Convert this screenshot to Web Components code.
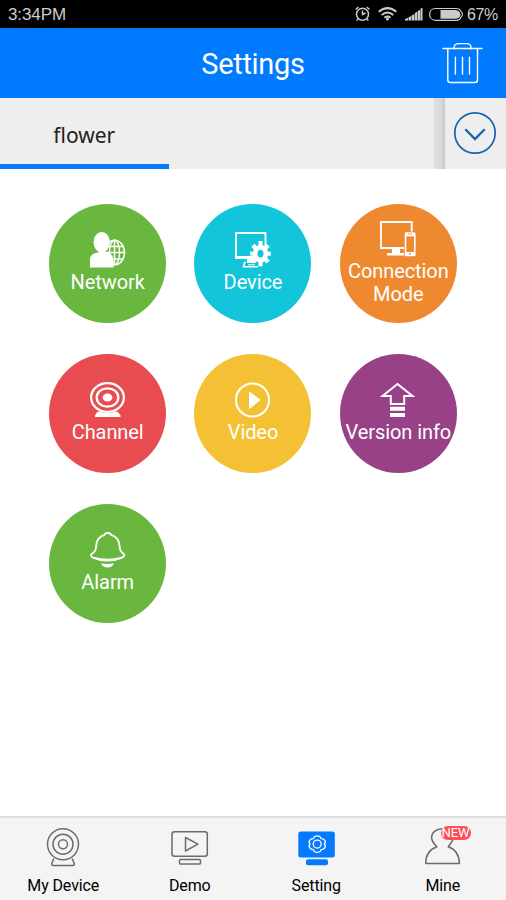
<!DOCTYPE html>
<html lang="en">
<head>
<meta charset="utf-8">
<title>Settings</title>
<style>
html,body{margin:0;height:100%}
body{font-family:Roboto,"Liberation Sans",sans-serif;background:#fff;overflow:hidden}
</style>
</head>
<body>
<settings-app></settings-app>
<script>
const ICONS = {
  network: `<ellipse cx="24.5" cy="20.500" rx="10" ry="12.3" fill="none" stroke="#fff" stroke-width="1.6"/>
    <ellipse cx="24.5" cy="20.500" rx="5" ry="12.3" fill="none" stroke="#fff" stroke-width="1.4"/>
    <path d="M24.5 8.5V33M15 14.500H33.500M15 20.500H35M15 27H33.500" stroke="#fff" stroke-width="1.5" fill="none"/>
    <path d="M0 35.500V27Q0 22 8 20.500L12 19.500L18 20.500Q22.500 22 23.500 27V35.500Z" fill="#fff"/>
    <ellipse cx="11.700" cy="10.300" rx="8.200" ry="10.300" fill="#fff"/>`,
  device: `<path d="M1 1H30.500V25H1Z" fill="none" stroke="#fff" stroke-width="1.900"/>
    <path d="M0 24H20V27H0Z" fill="#fff"/>
    <path d="M11 30.500H9.500L8.500 34.800H23" fill="none" stroke="#fff" stroke-width="1.500"/>
    <path d="M12 27H20V31H12Z" fill="#fff"/><path d="M13 32.300H20V33.300H13Z" fill="#fff"/>
    <g fill="#fff" transform="translate(25.500 21.700)"><ellipse rx="7.600" ry="9"/>
    <path d="M-2-12.700H2V12.700H-2Z"/><path d="M-2-10.300H2V10.300H-2Z" transform="rotate(90)"/><path d="M-2.200-11.300H2.200V11.300H-2.200Z" transform="rotate(42)"/><path d="M-2.200-11.300H2.200V11.300H-2.200Z" transform="rotate(-42)"/></g>
    <ellipse cx="25.500" cy="21.700" rx="3" ry="3.900" fill="#13c5db"/>`,
  connection: `<path d="M1 1H31.700V27H1Z" fill="none" stroke="#fff" stroke-width="1.900"/>
    <path d="M12 27H20V32H25V34.500H7V32H12Z" fill="#fff"/>
    <rect x="24" y="10.500" width="12" height="25.500" rx="2" fill="#ef892f"/>
    <rect x="24.700" y="11.300" width="10.900" height="24" rx="1.600" fill="#fff"/>
    <path d="M26.300 15.400H34V31H26.300Z" fill="#ef892f"/><path d="M28 13H32" stroke="#ef892f" stroke-width=".8"/><circle cx="30" cy="33" r=".9" fill="#ef892f"/>`,
  channel: `<g fill="none" stroke="#fff" stroke-width="2.300"><ellipse cx="17.500" cy="15.500" rx="16.400" ry="14.300"/><ellipse cx="17.500" cy="15.500" rx="10.800" ry="9.200"/></g>
    <ellipse cx="17.500" cy="15.500" rx="4.900" ry="4" fill="#fff"/>
    <path d="M7 30L10 29.500Q17.500 32.500 25 29.500L28 30Q29.300 32 30.500 33.200V35H5V33.200Q6.500 32 7 30Z" fill="#fff"/>`,
  video: `<circle cx="17.500" cy="18" r="16.500" fill="none" stroke="#fff" stroke-width="2.100"/>
    <path d="M14.500 10L25 18L14.500 26.500Z" fill="#fff" stroke="#fff" stroke-width="1" stroke-linejoin="round"/>`,
  version: `<path d="M17.500 2L32.500 14H24.200V21.900H10.800V14H2.500Z" fill="none" stroke="#fff" stroke-width="2"/>
    <path d="M10 24.700H25V28.700H10ZM10 31H25V35H10Z" fill="#fff"/>`,
  alarm: `<path d="M14.500 2.800C15.200 .4 20.300 .4 21 2.800C27 4.500 29.500 9 29.700 15C29.800 18.500 31 20 33.500 21.800C35.500 23.300 33.500 25 31.500 25.800C23 29.500 12 29.500 3.500 25.800C1.500 25 0 23.300 2 21.800C5 20 6 18 6 15C6.200 9 8.700 4.500 14.500 2.800Z" fill="none" stroke="#fff" stroke-width="1.800"/>
    <path d="M3.500 24.700Q17.500 29 32 24.700L29 27Q17.500 30 6 27Z" fill="#fff"/>
    <path d="M11 31.200Q17.500 32.800 24 31.200Q22 35.500 17.500 35.500Q13 35.500 11 31.200Z" fill="#fff"/>`
};
const TABS = {
  camera: `<g fill="none" stroke="#6c6c6c" stroke-width="1.500"><circle cx="20" cy="17.200" r="15.500"/><circle cx="20" cy="17.200" r="10"/><circle cx="20" cy="17.200" r="4.500"/>
    <path d="M10.700 31.500C10 34.500 8.700 35.500 8.700 37.200Q8.700 38.400 10 38.400H30Q31.300 38.400 31.300 37.200C31.300 35.500 30 34.500 29.300 31.500"/></g>`,
  demo: `<g fill="none" stroke="#6c6c6c" stroke-width="1.500" stroke-linejoin="round"><rect x="3" y="4.700" width="35.300" height="24.500" rx="2.500"/><path d="M16.500 10.500V24L28.900 17.200Z"/><rect x="10.500" y="32.500" width="21" height="4.600" rx="1.200"/></g>`,
  setting: `<g fill="#047aff"><rect x="2.300" y="4.500" width="36.500" height="26" rx="2.500"/><rect x="10" y="32.300" width="22" height="6" rx="2"/></g>
    <g transform="translate(.3 -.9)" fill="none" stroke="#fff" stroke-width="1.250"><path d="M17.800 10.800Q20.900 8.600 24 10.800Q24.300 13 26.500 12.700Q29.300 14.200 29 16.800Q27.100 18 29 19.300Q29.300 22 26.500 23.300Q24.300 23 24 25.200Q20.900 27.400 17.800 25.200Q17.500 23 15.300 23.300Q12.500 22 12.800 19.300Q14.700 18 12.800 16.800Q12.500 14.200 15.300 12.700Q17.500 13 17.800 10.800Z"/><circle cx="20.900" cy="18" r="4"/></g>`,
  mine: `<path d="M14.900 19.800C11.200 16 9.200 12.500 9.600 10C10.200-.9 31.200-.9 31.500 10C31.700 12.500 29.200 16 26.200 19.800C34.200 22.500 37.200 28.500 37.400 36.400H3.700C3.700 28.500 7.200 22.500 14.900 19.800Z" fill="none" stroke="#6c6c6c" stroke-width="1.500" stroke-linejoin="round"/>`
};
class Base extends HTMLElement{
  connectedCallback(){ this.attachShadow({mode:'open'}).innerHTML=this.render(); }
}
class StatusBar extends Base{
  render(){return `<style>
  :host{display:flex;align-items:center;height:28px;background:#000;color:#ccc;font:17px "Liberation Sans",sans-serif;padding:0 8px;box-sizing:border-box;justify-content:space-between}
  svg{display:block}.r{display:flex;align-items:center}.t{letter-spacing:-.1px;padding-top:1px}.p{font-size:16px;letter-spacing:-.4px;width:31px;padding-top:1px}</style>
  <span class="t">3:34PM</span>
  <span class="r"><svg width="112" height="28" viewBox="355 0 112 28" fill="none" stroke="#ccc">
  <circle cx="362.500" cy="14.200" r="6" stroke-width="1.500"/><path d="M362.500 10.500V14.500L365.500 13M355.700 9.500L358.500 7M369.500 9.500L366.700 7M358 19L356.700 20.500M367 19L368.300 20.500" stroke-width="1.500"/>
  <path d="M378.700 11.800Q387.500 4.500 396.300 11.800" stroke-width="2"/><path d="M381.700 14.900Q387.500 10 393.300 14.900" stroke-width="2"/><path d="M384.400 17.700Q387.500 15.300 390.600 17.700" stroke-width="2"/><circle cx="387.500" cy="19" r="1.500" fill="#ccc" stroke="none"/>
  <path d="M405 20.500V19L408 18V20.500ZM408.500 20.500V17.200L411.200 16V20.500ZM411.700 20.500V15.500L414.400 14V20.500ZM414.900 20.500V13L417.400 11.500V20.500ZM417.900 20.500V11L420.200 9.800V20.500ZM420.600 20.500V8.500L422.500 7.800V20.500Z" fill="#ccc" stroke="none"/>
  <path d="M435.500 8.500H456Q460 8.500 461 11.500Q462.500 12 462.500 14.200Q462.500 16.500 461 17Q460 20.300 456 20.300H435.500C427.700 20.300 427.700 8.500 435.500 8.500Z" stroke-width="1.200"/><path d="M440.500 10H456Q460 11 460.500 14.400Q460 18 456 18.800H440.500Z" fill="#ccc" stroke="none"/>
  </svg><span class="p">67%</span></span>`}
}
class AppHeader extends Base{
  render(){return `<style>
  :host{display:grid;grid-template-columns:1fr auto 1fr;align-items:center;height:70px;background:#007aff;color:#fff}
  h1{grid-column:2;margin:2px 0 0;font-size:29px;font-weight:400;line-height:34px;letter-spacing:-.3px}
  svg{justify-self:end;margin-right:22px}</style>
  <h1><slot></slot></h1>
  <svg width="42" height="44" viewBox="442 41 42 44" fill="none" stroke="#fff" stroke-width="1.400"><path d="M443 48.500H482M447.800 49V80Q447.800 82.500 450.300 82.500H475Q477.500 82.500 477.500 80V49M454 49V47.500Q454.500 43.600 458.500 43.600H466.500Q471 43.600 471 47.500V49M455.400 57.300V74M462.500 57.300V74M469.500 57.300V74" stroke-linecap="round"/></svg>`}
}
class DeviceTabs extends Base{
  render(){return `<style>
  :host{display:flex;height:70.500px;background:#eee;color:#222}
  .tab{box-sizing:border-box;width:168.500px;border-bottom:5.500px solid #047aff;display:flex;align-items:center;justify-content:center;font:21px/28px "Noto Sans",sans-serif;padding-top:8px}
  .fill{flex:1}.shade{width:11px;background:linear-gradient(90deg,#e0e0e0,#d9d9d9 65%,#c8c8c8)}
  .more{width:61.500px;display:flex;align-items:center;justify-content:center}svg{display:block}</style>
  <div class="tab"><slot></slot></div><div class="fill"></div><div class="shade"></div>
  <div class="more"><svg width="44" height="44" viewBox="0 0 44 44" fill="none" stroke="#1565b5"><circle cx="22" cy="22" r="20.200" stroke-width="1.700"/><path d="M12.300 18.200L22 28L31.700 18.200" stroke-width="2.300"/></svg></div>`}
}
class MenuTile extends Base{
  render(){return `<style>
  :host{display:flex;flex-direction:column;align-items:center;justify-content:center;width:117px;height:119.500px;border-radius:50%;color:#fff;background:${this.getAttribute('color')};box-sizing:border-box;padding-bottom:.5px}
  svg{display:block;flex:none;margin-bottom:3.300px}
  .l{font-size:20px;line-height:23px;text-align:center;letter-spacing:-.08px;white-space:pre}</style>
  <svg width="36" height="36" viewBox="0 0 36 36">${ICONS[this.getAttribute('icon')]}</svg><span class="l"><slot></slot></span>`}
}
class NavItem extends Base{
  render(){const b=this.getAttribute('badge');return `<style>
  :host{display:flex;flex-direction:column;align-items:center;color:#000;padding-top:8.500px;position:relative}
  svg{display:block}.l{font-size:16px;line-height:18px;margin-top:8px;letter-spacing:-.12px}
  .b{position:absolute;left:61px;top:8px;width:30px;height:14px;border-radius:7px;background:#fb5055;color:#fff;font-size:13px;line-height:14.500px;text-align:center;letter-spacing:-.1px}</style>
  <svg width="41" height="42" viewBox="0 0 41 42">${TABS[this.getAttribute('icon')]}</svg><span class="l"><slot></slot></span>${b?`<span class="b">${b}</span>`:''}`}
}
class SettingsApp extends Base{
  render(){return `<style>
  :host{display:flex;flex-direction:column;height:900px;width:506px;overflow:hidden}
  main{flex:1;display:grid;grid-template-columns:repeat(3,117px);grid-auto-rows:119.500px;gap:30.500px 28.300px;align-content:start;padding:35.300px 0 0 49.200px}
  nav{display:grid;grid-template-columns:repeat(4,1fr);height:84px;box-sizing:border-box;background:#f4f4f4;border-top:2px solid #dedede}</style>
  <status-bar></status-bar><app-header>Settings</app-header><device-tabs>flower</device-tabs>
  <main>
  <menu-tile icon="network" color="#6ab740">Network</menu-tile>
  <menu-tile icon="device" color="#13c5db">Device</menu-tile>
  <menu-tile icon="connection" color="#ef892f">Connection
Mode</menu-tile>
  <menu-tile icon="channel" color="#e84c50">Channel</menu-tile>
  <menu-tile icon="video" color="#f5c134">Video</menu-tile>
  <menu-tile icon="version" color="#984187">Version info</menu-tile>
  <menu-tile icon="alarm" color="#6ab740">Alarm</menu-tile>
  </main>
  <nav><nav-item icon="camera">My Device</nav-item><nav-item icon="demo">Demo</nav-item><nav-item icon="setting">Setting</nav-item><nav-item icon="mine" badge="NEW">Mine</nav-item></nav>`}
}
customElements.define('status-bar',StatusBar);
customElements.define('app-header',AppHeader);
customElements.define('device-tabs',DeviceTabs);
customElements.define('menu-tile',MenuTile);
customElements.define('nav-item',NavItem);
customElements.define('settings-app',SettingsApp);
</script>
</body>
</html>
